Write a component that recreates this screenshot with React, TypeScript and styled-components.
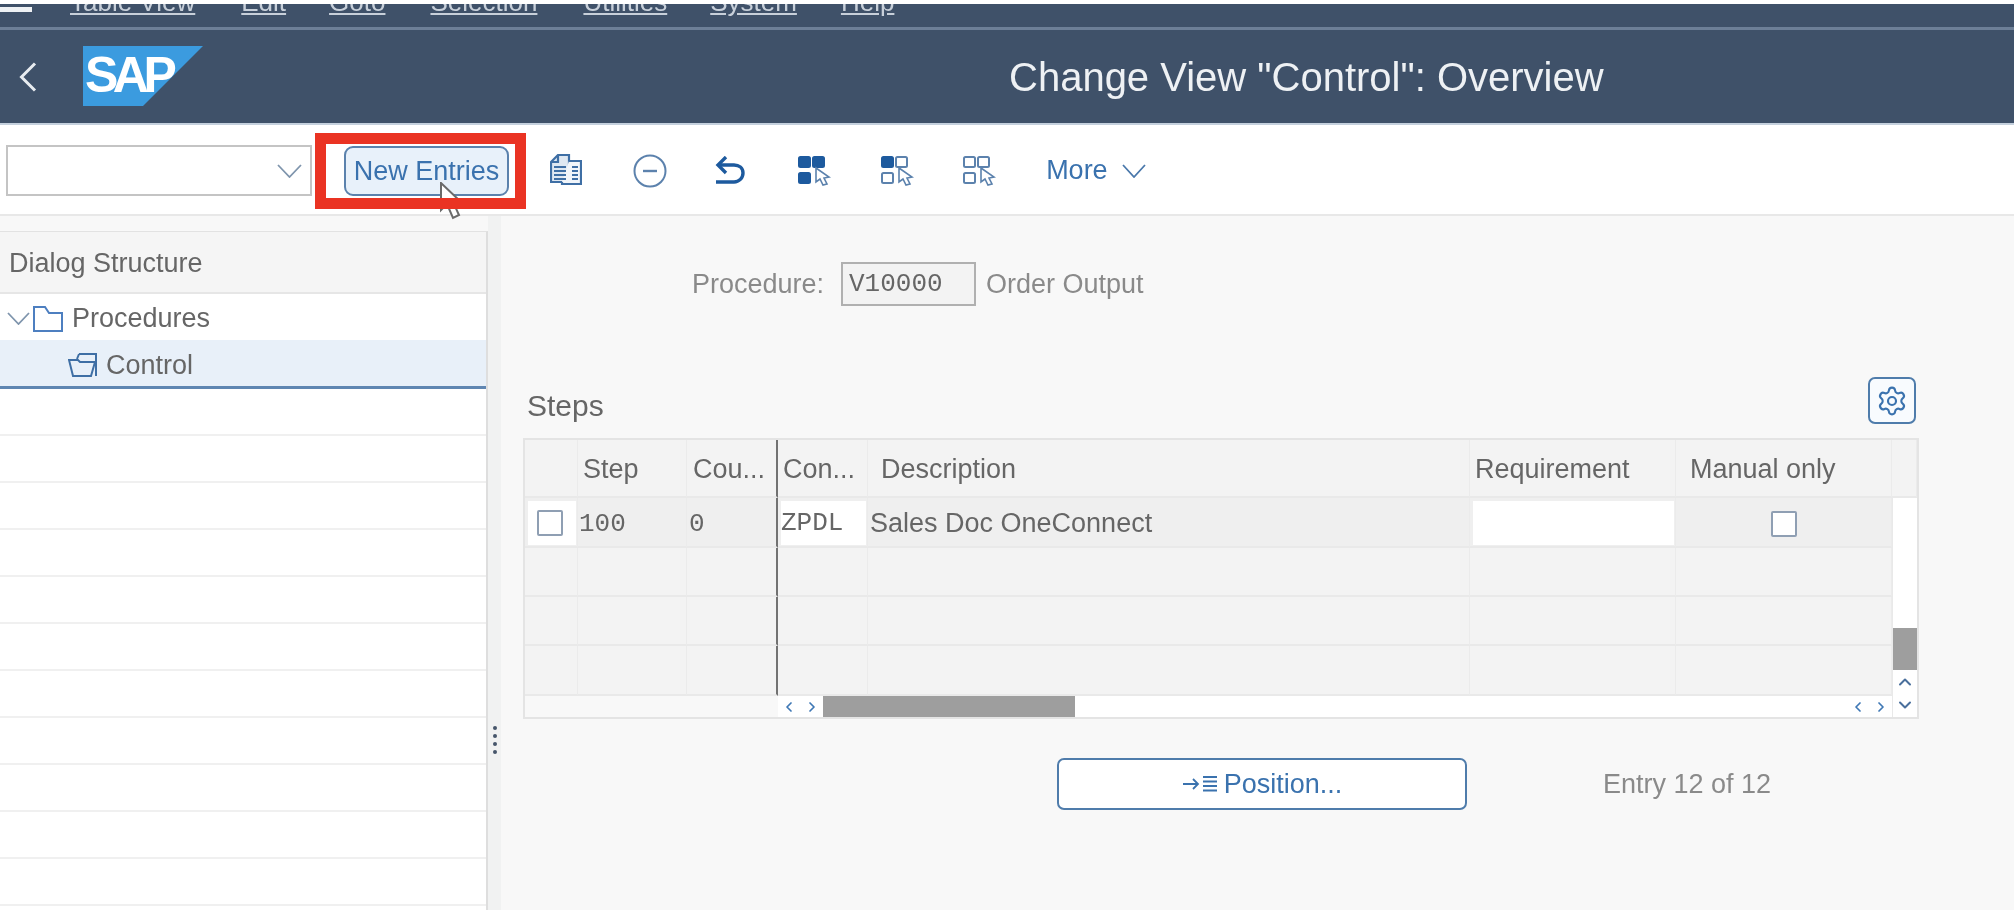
import React from "react";
import styled, { createGlobalStyle } from "styled-components";
import { ChevronDown, ChevronLeft, ChevronRight, ChevronUp, Settings } from "lucide-react";

const GlobalStyle = createGlobalStyle`
  html, body {
    margin: 0;
    padding: 0;
    background: #ffffff;
  }
  * {
    box-sizing: border-box;
  }
`;

const Page = styled.div`
  width: 2014px;
  height: 910px;
  overflow: hidden;
  display: flex;
  flex-direction: column;
  background: #f8f8f8;
  font-family: "Liberation Sans", Arial, sans-serif;
  filter: blur(0.6px);
`;

const TopStrip = styled.div`
  height: 4px;
  background: #ffffff;
`;

const Shell = styled.header`
  height: 121px;
  display: flex;
  flex-direction: column;
  background: #3f5169;
  border-bottom: 2px solid #c4d0dd;
`;

const MenuBar = styled.nav`
  height: 26px;
  flex: none;
  display: flex;
  align-items: flex-start;
  overflow: hidden;
  border-bottom: 3px solid #6d7f97;
`;

const Burger = styled.div`
  width: 32px;
  height: 5px;
  margin-top: 3px;
  background: #eef1f4;
`;

const MenuItem = styled.span<{ $left: number }>`
  margin-left: ${(p) => p.$left}px;
  margin-top: -15px;
  font-size: 26px;
  line-height: 26px;
  color: #c8d0da;
  text-decoration: underline;
`;

const TitleBar = styled.div`
  flex: 1;
  display: flex;
  align-items: center;
`;

const BackButton = styled.div`
  width: 83px;
  padding-left: 19px;
  display: flex;
`;

const Logo = styled.div`
  width: 120px;
  height: 60px;
  margin-top: -1px;
  padding-left: 2px;
  background: #3b9bdf;
  clip-path: polygon(0 0, 100% 0, 50% 100%, 0 100%);
  color: #ffffff;
  font-weight: 700;
  font-size: 50px;
  line-height: 58px;
  letter-spacing: -5.5px;
`;

const Title = styled.h1`
  margin: 0 0 0 806px;
  font-size: 40px;
  font-weight: 400;
  line-height: 44px;
  color: #eef1f4;
  white-space: nowrap;
`;

const Toolbar = styled.div`
  position: relative;
  z-index: 1;
  height: 91px;
  flex: none;
  padding-top: 2px;
  display: flex;
  align-items: center;
  background: #ffffff;
  border-bottom: 2px solid #e8e8e8;
`;

const SelectBox = styled.div`
  width: 306px;
  height: 51px;
  margin-left: 6px;
  padding-right: 8px;
  display: flex;
  align-items: center;
  justify-content: flex-end;
  background: #ffffff;
  border: 2px solid #c4c4c4;
`;

const ActionSlot = styled.div`
  position: relative;
  width: 211px;
  height: 76px;
  margin-left: 3px;
  padding: 13px 6px 13px 29px;
`;

const ActionButton = styled.button`
  width: 165px;
  height: 50px;
  padding: 2px 0 0;
  background: #e8f1fa;
  border: 2px solid #5b82ad;
  border-radius: 9px;
  font-family: inherit;
  font-size: 27px;
  color: #3a72ae;
`;

const Pointer = styled.svg`
  position: absolute;
  left: 124px;
  top: 49px;
`;

const RedFrame = styled.div`
  position: absolute;
  inset: 0;
  border: 11px solid #ea3323;
`;

const IconRow = styled.div`
  margin-left: 24px;
  display: flex;
  align-items: center;
`;

const IconSlot = styled.div`
  width: 82.7px;
  display: flex;
  align-items: center;
`;

const MoreButton = styled.div`
  display: flex;
  align-items: center;
  gap: 14px;
  font-size: 27px;
  color: #3a72ae;
`;

const Main = styled.main`
  flex: 1;
  display: flex;
  min-height: 0;
`;

const LeftColumn = styled.aside`
  width: 488px;
  flex: none;
  padding-top: 15px;
`;

const Tree = styled.div`
  height: 100%;
  background: #ffffff;
  border-top: 1px solid #e2e2e2;
  border-right: 2px solid #dedede;
`;

const TreeHeader = styled.div`
  height: 62px;
  padding: 2px 0 0 9px;
  display: flex;
  align-items: center;
  background: #f5f5f5;
  border-bottom: 2px solid #e6e6e6;
  font-size: 27px;
  color: #666666;
`;

const TreeRow = styled.div<{ $selected?: boolean; $indent: number }>`
  height: ${(p) => (p.$selected ? 49 : 46)}px;
  padding-left: ${(p) => p.$indent}px;
  padding-top: ${(p) => (p.$selected ? 4 : 3)}px;
  display: flex;
  align-items: center;
  gap: 9px;
  background: ${(p) => (p.$selected ? "#e8f0f9" : "#ffffff")};
  border-bottom: ${(p) => (p.$selected ? "3px solid #5f86b2" : "none")};
  font-size: 27px;
  color: #666666;
`;

const TreeToggle = styled.span`
  display: flex;
  margin-right: -6px;
`;

const EmptyRow = styled.div`
  height: 47px;
  border-bottom: 2px solid #f0f0f0;
`;

const Sash = styled.div`
  width: 13px;
  flex: none;
  padding-top: 510px;
  display: flex;
  flex-direction: column;
  align-items: center;
  gap: 4px;
  background: #f1f2f2;
`;

const SashDot = styled.i`
  width: 4px;
  height: 4px;
  border-radius: 50%;
  background: #46566b;
`;

const Content = styled.section`
  flex: 1;
  min-width: 0;
`;

const ProcedureRow = styled.div`
  margin-top: 46px;
  padding-left: 191px;
  display: flex;
  align-items: center;
  font-size: 27px;
  color: #8a8a8a;
`;

const ProcedureLabel = styled.span`
  width: 149px;
`;

const ProcedureInput = styled.div`
  width: 135px;
  height: 44px;
  padding-left: 6px;
  display: flex;
  align-items: center;
  background: #f3f3f3;
  border: 2px solid #b0b0b0;
  font-family: "Liberation Mono", monospace;
  font-size: 26px;
  color: #666666;
`;

const ProcedureText = styled.span`
  margin-left: 10px;
`;

const Panel = styled.div`
  width: 1396px;
  margin-left: 22px;
`;

const PanelHeader = styled.div`
  margin-top: 71px;
  display: flex;
  justify-content: space-between;
  align-items: center;
  padding: 0 3px 0 4px;
`;

const PanelTitle = styled.h2`
  margin: 10px 0 0;
  font-size: 30px;
  font-weight: 400;
  color: #666666;
`;

const GearButton = styled.div`
  width: 48px;
  height: 47px;
  display: flex;
  align-items: center;
  justify-content: center;
  background: #f8fbfe;
  border: 2px solid #4f7cab;
  border-radius: 7px;
  color: #3a72ae;
`;

const Table = styled.div`
  margin-top: 14px;
  display: grid;
  grid-template-columns: 53px 109px 91px 90px 602px 206px 216px 25px;
  grid-template-rows: 58px 50px 49px 49px 50px 21px;
  border: 2px solid #e4e4e4;
`;

const Cell = styled.div<{ $frozen?: boolean; $pad?: number; $first?: boolean }>`
  min-width: 0;
  padding-left: ${(p) => p.$pad || 0}px;
  padding-top: 3px;
  display: flex;
  align-items: center;
  background: ${(p) => (p.$first ? "#efefef" : "#f3f3f3")};
  border-bottom: 2px solid #e9e9e9;
  border-right: ${(p) => (p.$frozen ? "2px solid #727272" : "1px solid #ebebeb")};
  color: #666666;
  font-size: 27px;
  white-space: nowrap;
`;

const MonoText = styled.span`
  font-family: "Liberation Mono", monospace;
  font-size: 26px;
`;

const WhiteFill = styled.div<{ $center?: boolean }>`
  flex: 1;
  align-self: stretch;
  margin: 0 1px 1px 3px;
  padding-right: ${(p) => (p.$center ? 4 : 0)}px;
  display: flex;
  align-items: center;
  justify-content: ${(p) => (p.$center ? "center" : "flex-start")};
  background: #ffffff;
`;

const CheckBox = styled.div`
  width: 26px;
  height: 26px;
  background: #ffffff;
  border: 2px solid #8f9fb3;
  border-radius: 2px;
`;

const CheckCell = styled(Cell)`
  justify-content: center;
`;

const VerticalBar = styled.div`
  grid-column: 8;
  grid-row: 2 / 7;
  display: flex;
  flex-direction: column;
  background: #ffffff;
  border-left: 1px solid #e9e9e9;
`;

const VerticalTrack = styled.div`
  height: 130px;
`;

const VerticalThumb = styled.div`
  height: 42px;
  background: #9e9e9e;
`;

const ArrowBox = styled.div`
  height: 23px;
  display: flex;
  align-items: center;
  justify-content: center;
  color: #4a6f9c;
`;

const HorizontalBar = styled.div`
  grid-column: 1 / 8;
  grid-row: 6;
  display: flex;
  background: #ffffff;
`;

const FrozenPart = styled.div`
  width: 253px;
  background: #f8f8f8;
`;

const ScrollArrows = styled.div`
  width: 45px;
  flex: none;
  display: flex;
  align-items: center;
  justify-content: center;
  gap: 7px;
  color: #3f78b5;
`;

const HorizontalThumb = styled.div`
  width: 252px;
  background: #9e9e9e;
`;

const HorizontalRest = styled.div`
  flex: 1;
`;

const PositionRow = styled.div`
  margin-top: 39px;
  display: flex;
  align-items: center;
`;

const PositionButton = styled.button`
  width: 410px;
  height: 52px;
  margin-left: 534px;
  padding: 0;
  display: flex;
  align-items: center;
  justify-content: center;
  gap: 6px;
  background: #ffffff;
  border: 2px solid #4f7cab;
  border-radius: 7px;
  font-family: inherit;
  font-size: 27px;
  color: #3a72ae;
`;

const EntryText = styled.span`
  margin-left: 136px;
  font-size: 27px;
  color: #8a8a8a;
`;

const ICON_BLUE = "#3f6fa5";
const DARK_BLUE = "#1d5a9e";

// thin wide chevron used by the toolbar and the tree
const Caret = ({ width, height, color }: { width: number; height: number; color: string }) => (
  <svg width={width} height={height} viewBox={`0 0 ${width} ${height}`} fill="none" stroke={color} strokeWidth="1.8">
    <path d={`M1 1L${width / 2} ${height - 1}L${width - 1} 1`} />
  </svg>
);

const BackIcon = () => (
  <svg width="18" height="30" viewBox="0 0 18 30" fill="none" stroke="#e8ecf0" strokeWidth="3">
    <path d="M16 1.5L2.5 15L16 28.5" />
  </svg>
);

const CopyIcon = () => (
  <svg width="32" height="33" viewBox="0 0 32 33" fill="none" stroke={ICON_BLUE} strokeWidth="2.2">
    <path d="M8 1h11v27H1V8z" fill="#dfe8f2" />
    <path d="M8 1v7H1" />
    <path d="M19 7h12v23H12v-2" fill="#f1f5fa" />
    <path d="M4 13h12M4 17h12M4 21h12M4 25h12M22 13h6M22 17h6M22 21h6M22 25h6" strokeWidth="2" />
  </svg>
);

const MinusCircleIcon = () => (
  <svg width="34" height="34" viewBox="0 0 34 34" fill="none" stroke="#5c82ad" strokeWidth="2">
    <circle cx="17" cy="17" r="15.5" />
    <path d="M10 17h14" strokeWidth="2.4" />
  </svg>
);

const UndoIcon = () => (
  <svg width="30" height="29" viewBox="0 0 30 29" fill="none" stroke={DARK_BLUE} strokeWidth="3.4">
    <path d="M11 1L3 9l8 8" />
    <path d="M3 9h16c5 0 9 3 9 8s-4 9-9 9H1" />
  </svg>
);

// 2x2 squares with a mouse arrow over the last one, `filled` tells which squares are solid
const SelectIcon = ({ filled }: { filled: boolean[] }) => {
  const squares = [
    [1, 1],
    [15, 1],
    [1, 17],
  ];
  return (
    <svg width="34" height="30" viewBox="0 0 34 30" fill="none">
      {squares.map(([x, y], index) => (
        <rect
          key={index}
          x={x}
          y={y}
          width="11"
          height="10"
          rx="1.5"
          strokeWidth="2"
          fill={filled[index] ? DARK_BLUE : "none"}
          stroke={filled[index] ? DARK_BLUE : "#5c82ad"}
        />
      ))}
      <path d="M18 12l13 9-5 1 3 6-4 1-3-6-4 3z" stroke="#5c82ad" strokeWidth="1.6" fill="#ffffff" />
    </svg>
  );
};

const FolderIcon = () => (
  <svg width="30" height="26" viewBox="0 0 30 26" fill="none" stroke="#4d7fc0" strokeWidth="2">
    <path d="M1 1h11l4 6h13v18H1z" />
  </svg>
);

const FolderOpenIcon = () => (
  <svg width="29" height="24" viewBox="0 0 29 24" fill="none" stroke="#3f6fa5" strokeWidth="2">
    <path d="M1 7h9l2 2h15l-4 14H5z" />
    <path d="M11 1h17v22" />
    <path d="M11 1L9 6" />
  </svg>
);

const PositionIcon = () => (
  <svg width="36" height="20" viewBox="0 0 36 20" fill="none" stroke="#3a72ae" strokeWidth="1.8">
    <path d="M1 10h15M11 5l5 5-5 5" />
    <path d="M21 3h14M21 7.5h14M21 12h14M21 16.5h14" />
  </svg>
);

const menu = [
  { label: "Table View", left: 38 },
  { label: "Edit", left: 46 },
  { label: "Goto", left: 43 },
  { label: "Selection", left: 45 },
  { label: "Utilities", left: 46 },
  { label: "System", left: 43 },
  { label: "Help", left: 44 },
];

const headers = [
  { label: "", pad: 0 },
  { label: "Step", pad: 5 },
  { label: "Cou...", pad: 6 },
  { label: "Con...", pad: 5 },
  { label: "Description", pad: 13 },
  { label: "Requirement", pad: 5 },
  { label: "Manual only", pad: 14 },
  { label: "", pad: 0 },
];

const emptyRows = [0, 1, 2];
const columns = [0, 1, 2, 3, 4, 5, 6];
const treeLines = Array.from({ length: 11 }, (_, index) => index);

const App = () => (
  <>
    <GlobalStyle />
    <Page>
      <TopStrip />
      <Shell>
        <MenuBar>
          <Burger />
          {menu.map((item) => (
            <MenuItem key={item.label} $left={item.left}>
              {item.label}
            </MenuItem>
          ))}
        </MenuBar>
        <TitleBar>
          <BackButton>
            <BackIcon />
          </BackButton>
          <Logo>SAP</Logo>
          <Title>Change View "Control": Overview</Title>
        </TitleBar>
      </Shell>

      <Toolbar>
        <SelectBox>
          <Caret width={25} height={14} color="#7f95ad" />
        </SelectBox>
        <ActionSlot>
          <ActionButton>New Entries</ActionButton>
          <Pointer width="24" height="38" viewBox="0 0 24 38" fill="#ffffff" stroke="#6b6b6b" strokeWidth="2">
            <path d="M2 1v27l6-6 6 14 6-3-6-13h8z" />
          </Pointer>
          <RedFrame />
        </ActionSlot>
        <IconRow>
          <IconSlot>
            <CopyIcon />
          </IconSlot>
          <IconSlot>
            <MinusCircleIcon />
          </IconSlot>
          <IconSlot>
            <UndoIcon />
          </IconSlot>
          <IconSlot>
            <SelectIcon filled={[true, true, true]} />
          </IconSlot>
          <IconSlot>
            <SelectIcon filled={[true, false, false]} />
          </IconSlot>
          <IconSlot>
            <SelectIcon filled={[false, false, false]} />
          </IconSlot>
          <MoreButton>
            More
            <Caret width={24} height={14} color="#4a78ab" />
          </MoreButton>
        </IconRow>
      </Toolbar>

      <Main>
        <LeftColumn>
          <Tree>
            <TreeHeader>Dialog Structure</TreeHeader>
            <TreeRow $indent={7}>
              <TreeToggle>
                <Caret width={23} height={13} color="#7f95ad" />
              </TreeToggle>
              <FolderIcon />
              Procedures
            </TreeRow>
            <TreeRow $selected $indent={68}>
              <FolderOpenIcon />
              Control
            </TreeRow>
            {treeLines.map((line) => (
              <EmptyRow key={line} />
            ))}
          </Tree>
        </LeftColumn>
        <Sash>
          <SashDot />
          <SashDot />
          <SashDot />
          <SashDot />
        </Sash>
        <Content>
          <ProcedureRow>
            <ProcedureLabel>Procedure:</ProcedureLabel>
            <ProcedureInput>V10000</ProcedureInput>
            <ProcedureText>Order Output</ProcedureText>
          </ProcedureRow>

          <Panel>
            <PanelHeader>
              <PanelTitle>Steps</PanelTitle>
              <GearButton>
                <Settings size={32} strokeWidth={1.6} />
              </GearButton>
            </PanelHeader>

            <Table>
              {headers.map((header, index) => (
                <Cell key={index} $pad={header.pad} $frozen={index === 2}>
                  {header.label}
                </Cell>
              ))}

              <Cell $first>
                <WhiteFill $center>
                  <CheckBox />
                </WhiteFill>
              </Cell>
              <Cell $first $pad={1}>
                <MonoText>100</MonoText>
              </Cell>
              <Cell $first $pad={2} $frozen>
                <MonoText>0</MonoText>
              </Cell>
              <Cell $first>
                <WhiteFill>
                  <MonoText>ZPDL</MonoText>
                </WhiteFill>
              </Cell>
              <Cell $first $pad={2}>
                Sales Doc OneConnect
              </Cell>
              <Cell $first>
                <WhiteFill />
              </Cell>
              <CheckCell $first>
                <CheckBox />
              </CheckCell>

              <VerticalBar>
                <VerticalTrack />
                <VerticalThumb />
                <ArrowBox>
                  <ChevronUp size={20} strokeWidth={2.4} />
                </ArrowBox>
                <ArrowBox>
                  <ChevronDown size={20} strokeWidth={2.4} />
                </ArrowBox>
              </VerticalBar>

              {emptyRows.map((row) =>
                columns.map((column) => <Cell key={`${row}-${column}`} $frozen={column === 2} />)
              )}

              <HorizontalBar>
                <FrozenPart />
                <ScrollArrows>
                  <ChevronLeft size={16} strokeWidth={2.6} />
                  <ChevronRight size={16} strokeWidth={2.6} />
                </ScrollArrows>
                <HorizontalThumb />
                <HorizontalRest />
                <ScrollArrows>
                  <ChevronLeft size={16} strokeWidth={2.6} />
                  <ChevronRight size={16} strokeWidth={2.6} />
                </ScrollArrows>
              </HorizontalBar>
            </Table>

            <PositionRow>
              <PositionButton>
                <PositionIcon />
                Position...
              </PositionButton>
              <EntryText>Entry 12 of 12</EntryText>
            </PositionRow>
          </Panel>
        </Content>
      </Main>
    </Page>
  </>
);

export default App;
